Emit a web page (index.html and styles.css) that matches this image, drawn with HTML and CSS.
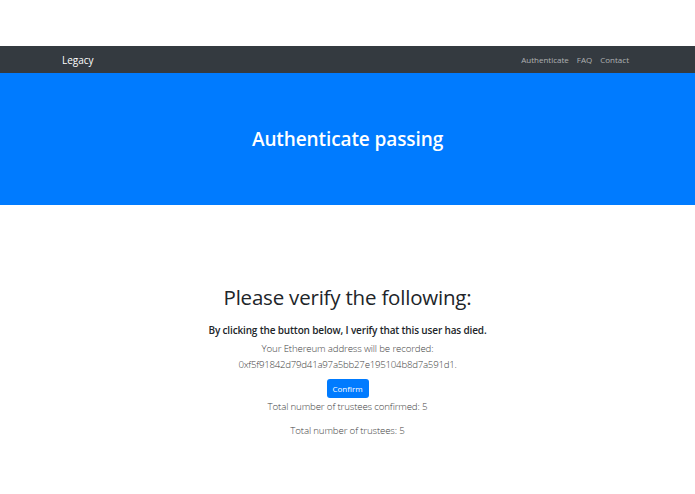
FILE: index.html
```html
<!DOCTYPE html>
<html>
<head>
<meta charset="utf-8">
<link rel="stylesheet" href="styles.css">
</head>
<body>
<div class="topgap"></div>
<nav class="navbar">
  <a class="brand">Legacy</a>
  <div class="links">
    <a>Authenticate</a>
    <a>FAQ</a>
    <a>Contact</a>
  </div>
</nav>
<header class="hero">
  <h1>Authenticate passing</h1>
</header>
<main class="content">
  <h2>Please verify the following:</h2>
  <p class="strong">By clicking the button below, I verify that this user has died.</p>
  <p class="light">Your Ethereum address will be recorded:<br><span class="addr">0xf5f91842d79d41a97a5bb27e195104b8d7a591d1.</span></p>
  <button class="btn">Confirm</button>
  <p class="light count">Total number of trustees confirmed: 5</p>
  <p class="light count2">Total number of trustees: 5</p>
</main>
</body>
</html>
```
FILE: styles.css
```css
body {
  margin: 0;
  font-family: "Open Sans", "Noto Sans", sans-serif;
  color: #212529;
  background: #fff;
}
.topgap { height: 46px; }
.navbar {
  height: 27px;
  background: #343a40;
  display: flex;
  align-items: center;
  justify-content: space-between;
  padding: 0 66px 0 62px;
}
.brand { color: #fff; font-size: 10px; }
.links { display: flex; gap: 8px; }
.links a { color: rgba(255,255,255,0.6); font-size: 8px; }
.hero {
  background: #007bff;
  height: 132px;
  display: flex;
  align-items: center;
  justify-content: center;
}
.hero h1 {
  margin: 0;
  color: #fff;
  font-size: 19px;
  font-weight: 600;
  letter-spacing: -0.1px;
}
.content {
  display: flex;
  flex-direction: column;
  align-items: center;
  padding-top: 78px;
  text-align: center;
}
.content h2 {
  margin: 0 0 12px;
  font-size: 20.5px;
  font-weight: 500;
  letter-spacing: -0.2px;
}
.strong {
  margin: 0 0 4px;
  font-size: 10px;
  font-weight: 600;
  letter-spacing: -0.15px;
}
.light {
  margin: 0;
  font-size: 9.7px;
  font-weight: 300;
  letter-spacing: -0.15px;
  color: #444;
  line-height: 16px;
}
.addr { letter-spacing: -0.25px; }
.btn {
  margin-top: 6px;
  background: #007bff;
  color: #fff;
  border: none;
  border-radius: 3px;
  font-family: inherit;
  font-size: 8px;
  width: 42px;
  height: 19px;
  padding: 0;
}
.count { margin-top: 1px; }
.count2 { margin-top: 8px; }
```
